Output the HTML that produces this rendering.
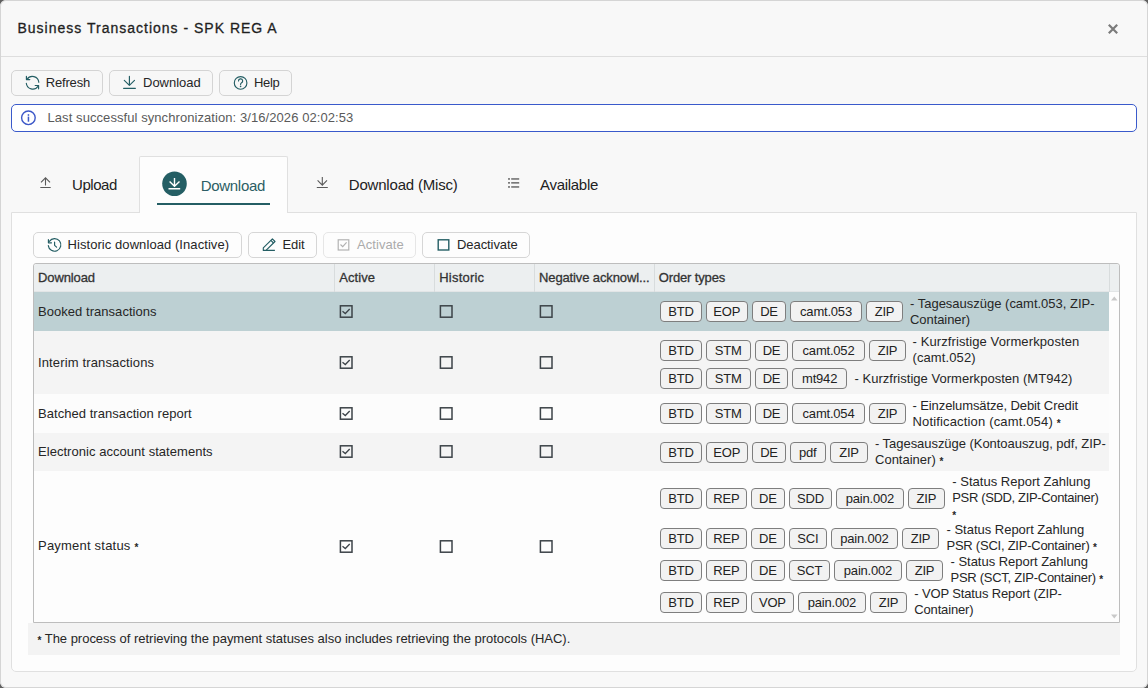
<!DOCTYPE html>
<html><head><meta charset="utf-8">
<style>
*{box-sizing:border-box;margin:0;padding:0}
html,body{width:1148px;height:688px;overflow:hidden;background:#5f5f5f;font-family:"Liberation Sans",sans-serif;color:#262626;font-size:13px}
.abs{position:absolute}
#dlg{position:absolute;left:0;top:0;width:1148px;height:688px;background:#f8f8f8;border-radius:6px;overflow:hidden}
#bd{position:absolute;left:0;top:0;width:1148px;height:688px;border:1px solid #d5d5d5;border-radius:6px;pointer-events:none}
.t{position:absolute;white-space:nowrap}
.chip{position:absolute;border:1px solid #7e7e7e;border-radius:4px;background:#f2f2f2;text-align:center;font-size:13px;line-height:19px;color:#222;letter-spacing:-0.2px}
.ast{font-size:10px;font-weight:700;position:relative;top:1px}
</style></head><body>
<div id="dlg">
<div class="t" style="left:17.5px;top:19.15px;font-size:14px;line-height:18px;color:#1f1f1f;letter-spacing:1.000px;-webkit-text-stroke:0.3px #1f1f1f">Business Transactions - SPK REG A</div>
<div class="abs" style="left:0px;top:56px;width:1148px;height:1px;background:#dedede"></div>
<div class="abs" style="left:11px;top:70px;width:92px;height:26px;border:1px solid #d4d4d4;border-radius:5px;background:#f7f7f7"></div>
<div class="abs" style="left:109px;top:70px;width:104px;height:26px;border:1px solid #d4d4d4;border-radius:5px;background:#f7f7f7"></div>
<div class="abs" style="left:219px;top:70px;width:73px;height:26px;border:1px solid #d4d4d4;border-radius:5px;background:#f7f7f7"></div>
<div class="t" style="left:45.7px;top:74.50px;font-size:13px;line-height:16px;letter-spacing:-0.164px">Refresh</div>
<div class="t" style="left:143px;top:74.50px;font-size:13px;line-height:16px;letter-spacing:-0.004px">Download</div>
<div class="t" style="left:254px;top:74.50px;font-size:13px;line-height:16px;letter-spacing:-0.317px">Help</div>
<div class="abs" style="left:11px;top:104px;width:1126px;height:28px;border:1.5px solid #3a5acb;border-radius:5px;background:#fff"></div>
<div class="t" style="left:47.5px;top:109.50px;font-size:13px;line-height:16px;color:#5a5a5a;letter-spacing:0.074px">Last successful synchronization: 3/16/2026 02:02:53</div>
<div class="abs" style="left:11px;top:212px;width:1126px;height:460px;border:1px solid #e0e0e0;border-radius:0 0 5px 5px;background:#fdfdfd"></div>
<div class="abs" style="left:139px;top:156px;width:149px;height:57px;border:1px solid #e0e0e0;border-bottom:none;background:#fdfdfd;border-radius:2px 2px 0 0"></div>
<div class="t" style="left:72px;top:175.30px;font-size:15px;line-height:19px;color:#222;letter-spacing:-0.449px">Upload</div>
<div class="t" style="left:200.75px;top:176.30px;font-size:15px;line-height:19px;color:#2c5d64;letter-spacing:-0.310px">Download</div>
<div class="t" style="left:348.75px;top:175.30px;font-size:15px;line-height:19px;color:#222;letter-spacing:-0.190px">Download (Misc)</div>
<div class="t" style="left:540px;top:175.30px;font-size:15px;line-height:19px;color:#222;letter-spacing:-0.289px">Available</div>
<div class="abs" style="left:157px;top:203px;width:113px;height:2px;background:#245e64"></div>
<div class="abs" style="left:33px;top:232px;width:208.5px;height:26px;border:1px solid #d6d6d6;border-radius:5px;background:#fdfdfd"></div>
<div class="abs" style="left:248px;top:232px;width:68.5px;height:26px;border:1px solid #d6d6d6;border-radius:5px;background:#fdfdfd"></div>
<div class="abs" style="left:323px;top:232px;width:92.5px;height:26px;border:1px solid #e6e6e6;border-radius:5px;background:#fdfdfd"></div>
<div class="abs" style="left:422px;top:232px;width:107.5px;height:26px;border:1px solid #d6d6d6;border-radius:5px;background:#fdfdfd"></div>
<div class="t" style="left:67.5px;top:236.50px;font-size:13px;line-height:16px;letter-spacing:0.069px">Historic download (Inactive)</div>
<div class="t" style="left:282.5px;top:236.50px;font-size:13px;line-height:16px;letter-spacing:-0.119px">Edit</div>
<div class="t" style="left:357px;top:236.50px;font-size:13px;line-height:16px;color:#ababab;letter-spacing:0.079px">Activate</div>
<div class="t" style="left:457px;top:236.50px;font-size:13px;line-height:16px;letter-spacing:-0.069px">Deactivate</div>
<div class="abs" style="left:33px;top:263px;width:1087px;height:360px;border:1px solid #bdbdbd;border-radius:3px 3px 0 0;background:#fdfdfd"></div>
<div class="abs" style="left:34px;top:264px;width:1085px;height:28px;background:#eceff0;border-radius:3px 3px 0 0"></div>
<div class="abs" style="left:34px;top:291px;width:1085px;height:1px;background:#e2e5e6"></div>
<div class="abs" style="left:334px;top:264px;width:1px;height:28px;background:#d8dcdd"></div>
<div class="abs" style="left:434px;top:264px;width:1px;height:28px;background:#d8dcdd"></div>
<div class="abs" style="left:534px;top:264px;width:1px;height:28px;background:#d8dcdd"></div>
<div class="abs" style="left:654px;top:264px;width:1px;height:28px;background:#d8dcdd"></div>
<div class="abs" style="left:1109px;top:264px;width:1px;height:28px;background:#d8dcdd"></div>
<div class="t" style="left:38px;top:269.50px;font-size:13px;line-height:16px;color:#333;letter-spacing:-0.111px;-webkit-text-stroke:0.3px #333">Download</div>
<div class="t" style="left:339.25px;top:269.50px;font-size:13px;line-height:16px;color:#333;letter-spacing:0.079px;-webkit-text-stroke:0.3px #333">Active</div>
<div class="t" style="left:439.25px;top:269.50px;font-size:13px;line-height:16px;color:#333;letter-spacing:0.208px;-webkit-text-stroke:0.3px #333">Historic</div>
<div class="t" style="left:539px;top:269.50px;font-size:13px;line-height:16px;color:#333;letter-spacing:-0.121px;-webkit-text-stroke:0.3px #333">Negative acknowl...</div>
<div class="t" style="left:658.75px;top:269.50px;font-size:13px;line-height:16px;color:#333;letter-spacing:-0.137px;-webkit-text-stroke:0.3px #333">Order types</div>
<div class="abs" style="left:34px;top:292px;width:1075px;height:39px;background:#bdd0d3"></div>
<div class="abs" style="left:34px;top:331px;width:1075px;height:63px;background:#f4f4f4"></div>
<div class="abs" style="left:34px;top:394px;width:1075px;height:38.5px;background:#fcfcfc"></div>
<div class="abs" style="left:34px;top:432.5px;width:1075px;height:38.5px;background:#f4f4f4"></div>
<div class="abs" style="left:34px;top:471px;width:1075px;height:151px;background:#fdfdfd"></div>
<div class="t" style="left:38px;top:303.50px;font-size:13px;line-height:16px;letter-spacing:0.042px">Booked transactions</div>
<div class="t" style="left:38px;top:354.50px;font-size:13px;line-height:16px;letter-spacing:0.140px">Interim transactions</div>
<div class="t" style="left:38px;top:405.50px;font-size:13px;line-height:16px;letter-spacing:0.049px">Batched transaction report</div>
<div class="t" style="left:38px;top:443.50px;font-size:13px;line-height:16px;letter-spacing:0.042px">Electronic account statements</div>
<div class="t" style="left:38px;top:537.50px;font-size:13px;line-height:16px;letter-spacing:0.212px">Payment status <span class='ast'>*</span></div>
<div class="chip" style="left:660.20px;top:301px;width:41.60px;height:21px">BTD</div>
<div class="chip" style="left:705.70px;top:301px;width:42.10px;height:21px">EOP</div>
<div class="chip" style="left:752.20px;top:301px;width:33.60px;height:21px">DE</div>
<div class="chip" style="left:790.20px;top:301px;width:71.60px;height:21px">camt.053</div>
<div class="chip" style="left:866.20px;top:301px;width:36.60px;height:21px">ZIP</div>
<div class="t" style="left:910px;top:295.50px;font-size:13px;line-height:16px;letter-spacing:-0.007px">- Tagesauszüge (camt.053, ZIP-</div>
<div class="t" style="left:910px;top:311.50px;font-size:13px;line-height:16px;letter-spacing:-0.073px">Container)</div>
<div class="chip" style="left:660.20px;top:339.5px;width:41.60px;height:21px">BTD</div>
<div class="chip" style="left:705.70px;top:339.5px;width:45.10px;height:21px">STM</div>
<div class="chip" style="left:755.20px;top:339.5px;width:32.60px;height:21px">DE</div>
<div class="chip" style="left:792.20px;top:339.5px;width:72.60px;height:21px">camt.052</div>
<div class="chip" style="left:869.20px;top:339.5px;width:36.60px;height:21px">ZIP</div>
<div class="t" style="left:912.5px;top:333.50px;font-size:13px;line-height:16px;letter-spacing:0.103px">- Kurzfristige Vormerkposten</div>
<div class="t" style="left:912.5px;top:349.50px;font-size:13px;line-height:16px;letter-spacing:0.101px">(camt.052)</div>
<div class="chip" style="left:660.20px;top:368px;width:41.60px;height:21px">BTD</div>
<div class="chip" style="left:705.70px;top:368px;width:45.10px;height:21px">STM</div>
<div class="chip" style="left:755.20px;top:368px;width:32.60px;height:21px">DE</div>
<div class="chip" style="left:792.20px;top:368px;width:54.85px;height:21px">mt942</div>
<div class="t" style="left:854.5px;top:370.50px;font-size:13px;line-height:16px;letter-spacing:0.030px">- Kurzfristige Vormerkposten (MT942)</div>
<div class="chip" style="left:660.20px;top:403px;width:41.60px;height:21px">BTD</div>
<div class="chip" style="left:705.70px;top:403px;width:45.10px;height:21px">STM</div>
<div class="chip" style="left:755.20px;top:403px;width:32.60px;height:21px">DE</div>
<div class="chip" style="left:792.20px;top:403px;width:72.60px;height:21px">camt.054</div>
<div class="chip" style="left:869.20px;top:403px;width:36.60px;height:21px">ZIP</div>
<div class="t" style="left:912.5px;top:397.50px;font-size:13px;line-height:16px;letter-spacing:-0.100px">- Einzelumsätze, Debit Credit</div>
<div class="t" style="left:912.5px;top:413.50px;font-size:13px;line-height:16px;letter-spacing:0.159px">Notificaction (camt.054) <span class='ast'>*</span></div>
<div class="chip" style="left:660.20px;top:441.5px;width:41.60px;height:21px">BTD</div>
<div class="chip" style="left:705.70px;top:441.5px;width:42.10px;height:21px">EOP</div>
<div class="chip" style="left:752.20px;top:441.5px;width:33.60px;height:21px">DE</div>
<div class="chip" style="left:789.70px;top:441.5px;width:36.10px;height:21px">pdf</div>
<div class="chip" style="left:830.20px;top:441.5px;width:37.60px;height:21px">ZIP</div>
<div class="t" style="left:875px;top:435.50px;font-size:13px;line-height:16px;letter-spacing:-0.045px">- Tagesauszüge (Kontoauszug, pdf, ZIP-</div>
<div class="t" style="left:875px;top:451.50px;font-size:13px;line-height:16px;letter-spacing:0.007px">Container) <span class='ast'>*</span></div>
<div class="chip" style="left:660.20px;top:488px;width:41.60px;height:21px">BTD</div>
<div class="chip" style="left:705.70px;top:488px;width:41.35px;height:21px">REP</div>
<div class="chip" style="left:750.95px;top:488px;width:33.85px;height:21px">DE</div>
<div class="chip" style="left:789.20px;top:488px;width:42.60px;height:21px">SDD</div>
<div class="chip" style="left:836.20px;top:488px;width:67.35px;height:21px">pain.002</div>
<div class="chip" style="left:907.95px;top:488px;width:36.85px;height:21px">ZIP</div>
<div class="t" style="left:952.25px;top:473.50px;font-size:13px;line-height:16px;letter-spacing:0.012px">- Status Report Zahlung</div>
<div class="t" style="left:952.25px;top:489.50px;font-size:13px;line-height:16px;letter-spacing:-0.350px">PSR (SDD, ZIP-Container)</div>
<div class="t" style="left:952.25px;top:505.50px;font-size:13px;line-height:16px;letter-spacing:0.000px"><span class='ast'>*</span></div>
<div class="chip" style="left:660.20px;top:528px;width:41.60px;height:21px">BTD</div>
<div class="chip" style="left:705.70px;top:528px;width:41.35px;height:21px">REP</div>
<div class="chip" style="left:750.95px;top:528px;width:33.85px;height:21px">DE</div>
<div class="chip" style="left:789.20px;top:528px;width:37.35px;height:21px">SCI</div>
<div class="chip" style="left:830.95px;top:528px;width:66.85px;height:21px">pain.002</div>
<div class="chip" style="left:902.20px;top:528px;width:36.60px;height:21px">ZIP</div>
<div class="t" style="left:946.5px;top:522.00px;font-size:13px;line-height:16px;letter-spacing:-0.011px">- Status Report Zahlung</div>
<div class="t" style="left:946.5px;top:538.00px;font-size:13px;line-height:16px;letter-spacing:-0.242px">PSR (SCI, ZIP-Container) <span class='ast'>*</span></div>
<div class="chip" style="left:660.20px;top:560px;width:41.60px;height:21px">BTD</div>
<div class="chip" style="left:705.70px;top:560px;width:41.35px;height:21px">REP</div>
<div class="chip" style="left:750.95px;top:560px;width:33.85px;height:21px">DE</div>
<div class="chip" style="left:789.20px;top:560px;width:40.60px;height:21px">SCT</div>
<div class="chip" style="left:834.20px;top:560px;width:67.60px;height:21px">pain.002</div>
<div class="chip" style="left:906.20px;top:560px;width:36.60px;height:21px">ZIP</div>
<div class="t" style="left:950.5px;top:554.00px;font-size:13px;line-height:16px;letter-spacing:-0.022px">- Status Report Zahlung</div>
<div class="t" style="left:950.5px;top:570.00px;font-size:13px;line-height:16px;letter-spacing:-0.267px">PSR (SCT, ZIP-Container) <span class='ast'>*</span></div>
<div class="chip" style="left:660.20px;top:592px;width:41.60px;height:21px">BTD</div>
<div class="chip" style="left:705.70px;top:592px;width:41.35px;height:21px">REP</div>
<div class="chip" style="left:751.20px;top:592px;width:42.35px;height:21px">VOP</div>
<div class="chip" style="left:797.95px;top:592px;width:67.85px;height:21px">pain.002</div>
<div class="chip" style="left:870.20px;top:592px;width:36.60px;height:21px">ZIP</div>
<div class="t" style="left:914.25px;top:586.00px;font-size:13px;line-height:16px;letter-spacing:-0.134px">- VOP Status Report (ZIP-</div>
<div class="t" style="left:914.25px;top:602.00px;font-size:13px;line-height:16px;letter-spacing:-0.156px">Container)</div>
<div class="abs" style="left:28px;top:623px;width:1092px;height:32px;background:#f3f3f3"></div>
<div class="t" style="left:37.5px;top:630.50px;font-size:13px;line-height:16px;letter-spacing:-0.021px"><span class='ast'>*</span> The process of retrieving the payment statuses also includes retrieving the protocols (HAC).</div>
<svg class="abs" style="left:0;top:0" width="1148" height="688" viewBox="0 0 1148 688"><path d="M1108.8 24.8L1117.2 33.2M1117.2 24.8L1108.8 33.2" stroke="#7b7b7b" stroke-width="2.2"/><g fill="none" stroke="#245e64" stroke-width="1.15" stroke-linecap="round" stroke-linejoin="round"><path d="M38.8 82.3A6.4 6.4 0 0 0 27 79.4"/><path d="M26.4 76.3V79.6H29.8"/><path d="M26.3 83.3A6.4 6.4 0 0 0 38 86.2"/><path d="M38.6 88.8V85.5H35.2"/></g><g fill="none" stroke="#245e64" stroke-width="1.15" stroke-linecap="round" stroke-linejoin="round"><path d="M129.4 76.3V85.3M124.3 80.4L129.4 85.4L134.5 80.4M123.6 88.3H135.4"/></g><g fill="none" stroke="#245e64" stroke-width="1.15"><circle cx="240.6" cy="82.9" r="6.3"/><path d="M238.5 81A2.1 2.1 0 1 1 241.4 82.9C240.8 83.2 240.6 83.6 240.6 84.4" stroke-linecap="round"/></g><circle cx="240.6" cy="86.4" r="0.8" fill="#245e64"/><g fill="none" stroke="#3d58c8" stroke-width="1.4"><circle cx="28.4" cy="117.8" r="6.8"/></g><rect x="27.7" y="114.2" width="1.5" height="1.6" fill="#3d58c8"/><rect x="27.7" y="116.6" width="1.5" height="5.1" fill="#3d58c8"/><g fill="none" stroke="#5a5a5a" stroke-width="1.1" stroke-linecap="butt"><path d="M45.5 185.4V178M41 182.4L45.5 177.8L50 182.4M40.3 187.5H50.7"/></g><circle cx="174.5" cy="183.8" r="12.3" fill="#245e64"/><g fill="none" stroke="#fff" stroke-width="1.4"><path d="M174.5 178V186.2M169.6 181.5L174.5 186.3L179.5 181.5M168.5 188.7H180.2"/></g><g fill="none" stroke="#5a5a5a" stroke-width="1.1"><path d="M322.3 177V185M317.6 180.4L322.3 185.1L327 180.4M316.8 187.5H327.8"/></g><g fill="#6b6b6b"><rect x="508" y="178.2" width="2" height="1.5"/><rect x="508" y="182.1" width="2" height="1.5"/><rect x="508" y="186.2" width="2" height="1.5"/><rect x="511.2" y="178.2" width="8" height="1.5"/><rect x="511.2" y="182.1" width="8" height="1.5"/><rect x="511.2" y="186.2" width="8" height="1.5"/></g><g fill="none" stroke="#245e64" stroke-width="1.15" stroke-linecap="round" stroke-linejoin="round"><path d="M49.4 241.3A6.3 6.3 0 1 1 48.3 245.6"/><path d="M48.4 239.5V242.8H51.5"/><path d="M54.6 242V245.3L56.6 247.2"/></g><g fill="none" stroke="#245e64" stroke-width="1.15" stroke-linejoin="round"><path d="M263.3 250.4V247.8L272.4 238.9L275 241.5L266 250.4Z"/><path d="M266 250.4H274.9M270.9 240.4L273.5 243"/></g><g fill="none" stroke="#b0b0b0" stroke-width="1.15"><rect x="338.2" y="239.8" width="10.6" height="10.2"/><path d="M340.5 244.5L342.7 246.6L346.6 242.4"/></g><g fill="none" stroke="#245e64" stroke-width="1.4"><rect x="438.2" y="239.8" width="10.6" height="10.2"/></g><rect x="340.4" y="305.8" width="11.6" height="11.4" fill="none" stroke="#3c4348" stroke-width="1.5"/><path d="M342.5 311.2L345.3 313.5L349.7 309.0" fill="none" stroke="#3c4348" stroke-width="1.3"/><rect x="440.4" y="305.8" width="11.6" height="11.4" fill="none" stroke="#3c4348" stroke-width="1.5"/><rect x="540.4000000000001" y="305.8" width="11.6" height="11.4" fill="none" stroke="#3c4348" stroke-width="1.5"/><rect x="340.4" y="356.8" width="11.6" height="11.4" fill="none" stroke="#3c4348" stroke-width="1.5"/><path d="M342.5 362.2L345.3 364.5L349.7 360.0" fill="none" stroke="#3c4348" stroke-width="1.3"/><rect x="440.4" y="356.8" width="11.6" height="11.4" fill="none" stroke="#3c4348" stroke-width="1.5"/><rect x="540.4000000000001" y="356.8" width="11.6" height="11.4" fill="none" stroke="#3c4348" stroke-width="1.5"/><rect x="340.4" y="407.8" width="11.6" height="11.4" fill="none" stroke="#3c4348" stroke-width="1.5"/><path d="M342.5 413.2L345.3 415.5L349.7 411.0" fill="none" stroke="#3c4348" stroke-width="1.3"/><rect x="440.4" y="407.8" width="11.6" height="11.4" fill="none" stroke="#3c4348" stroke-width="1.5"/><rect x="540.4000000000001" y="407.8" width="11.6" height="11.4" fill="none" stroke="#3c4348" stroke-width="1.5"/><rect x="340.4" y="445.8" width="11.6" height="11.4" fill="none" stroke="#3c4348" stroke-width="1.5"/><path d="M342.5 451.2L345.3 453.5L349.7 449.0" fill="none" stroke="#3c4348" stroke-width="1.3"/><rect x="440.4" y="445.8" width="11.6" height="11.4" fill="none" stroke="#3c4348" stroke-width="1.5"/><rect x="540.4000000000001" y="445.8" width="11.6" height="11.4" fill="none" stroke="#3c4348" stroke-width="1.5"/><rect x="340.4" y="540.8" width="11.6" height="11.4" fill="none" stroke="#3c4348" stroke-width="1.5"/><path d="M342.5 546.2L345.3 548.5L349.7 544.0" fill="none" stroke="#3c4348" stroke-width="1.3"/><rect x="440.4" y="540.8" width="11.6" height="11.4" fill="none" stroke="#3c4348" stroke-width="1.5"/><rect x="540.4000000000001" y="540.8" width="11.6" height="11.4" fill="none" stroke="#3c4348" stroke-width="1.5"/><path d="M1111 300.5H1117.5L1114.25 296.5Z" fill="#c9c9c9"/><path d="M1111 614.5H1117.5L1114.25 618.5Z" fill="#c9c9c9"/></svg>
<div id="bd"></div>
</div>
</body></html>
